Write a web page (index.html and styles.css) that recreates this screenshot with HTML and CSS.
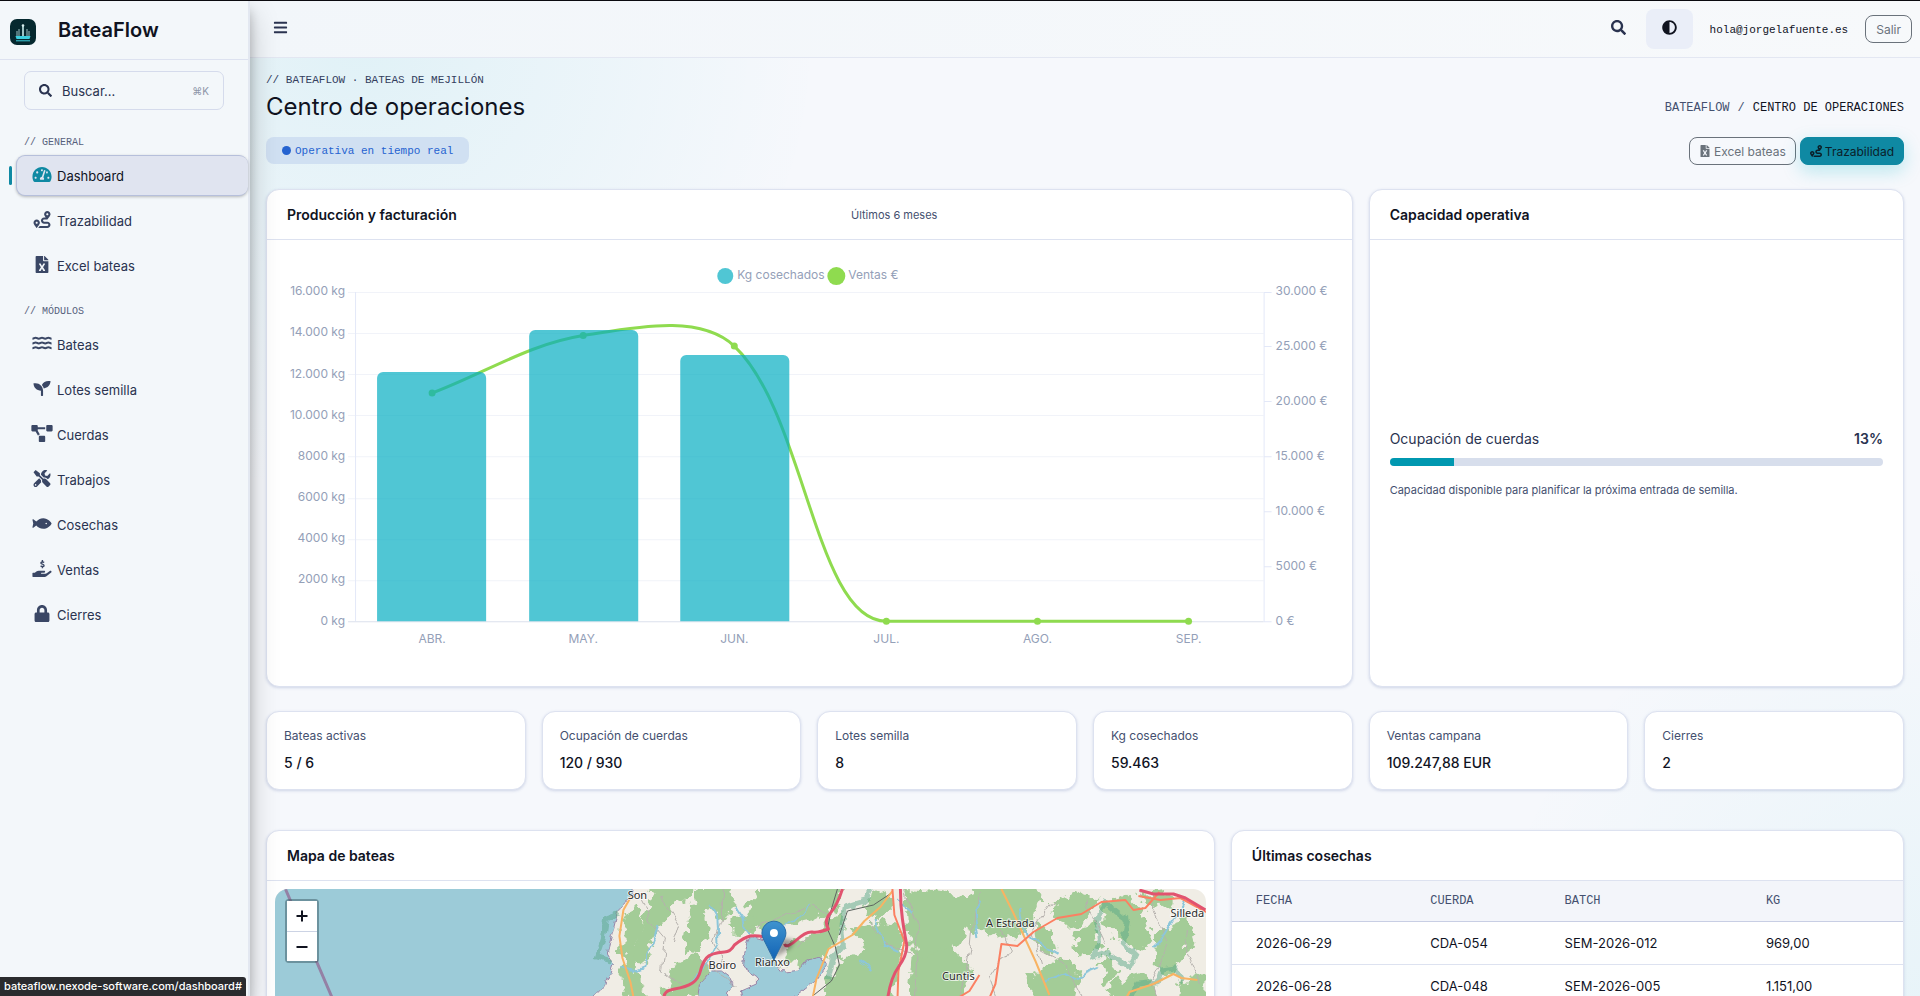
FILE: index.html
```html
<!DOCTYPE html>
<html lang="es">
<head>
<meta charset="utf-8">
<meta name="viewport" content="width=device-width, initial-scale=1">
<title>BateaFlow · Centro de operaciones</title>
<link rel="stylesheet" href="styles.css">
</head>
<body>
<svg class="sprite" aria-hidden="true">
  <symbol id="i-search" viewBox="0 0 512 512"><path d="M505 442.7L405.3 343c-4.5-4.5-10.6-7-17-7H372c27.6-35.3 44-79.7 44-128C416 93.1 322.9 0 208 0S0 93.1 0 208s93.1 208 208 208c48.3 0 92.7-16.4 128-44v16.3c0 6.4 2.5 12.5 7 17l99.7 99.7c9.4 9.4 24.6 9.4 33.9 0l28.3-28.3c9.4-9.4 9.4-24.6.1-34zM208 336c-70.7 0-128-57.2-128-128 0-70.7 57.2-128 128-128 70.7 0 128 57.2 128 128 0 70.7-57.2 128-128 128z"/></symbol>
  <symbol id="i-contrast" viewBox="0 0 512 512"><path d="M8 256c0 136.966 111.033 248 248 248s248-111.034 248-248S392.966 8 256 8 8 119.033 8 256zm248 184V72c101.705 0 184 82.311 184 184 0 101.705-82.311 184-184 184z"/></symbol>
  <symbol id="i-bars" viewBox="0 0 448 512"><path d="M16 60h416a16 16 0 0 1 16 16v40a16 16 0 0 1-16 16H16a16 16 0 0 1-16-16V76a16 16 0 0 1 16-16zm0 160h416a16 16 0 0 1 16 16v40a16 16 0 0 1-16 16H16a16 16 0 0 1-16-16v-40a16 16 0 0 1 16-16zm0 160h416a16 16 0 0 1 16 16v40a16 16 0 0 1-16 16H16a16 16 0 0 1-16-16v-40a16 16 0 0 1 16-16z"/></symbol>
  <symbol id="i-gauge" viewBox="0 0 576 512"><path d="M288 32C128.94 32 0 160.94 0 320c0 52.8 14.25 102.26 39.06 144.8 5.61 9.62 16.3 15.2 27.44 15.2h443c11.14 0 21.83-5.58 27.44-15.2C561.75 422.26 576 372.8 576 320c0-159.06-128.94-288-288-288zm0 64c14.71 0 26.58 10.13 30.32 23.65-1.11 2.26-2.64 4.23-3.45 6.67l-9.22 27.67c-5.13 3.49-10.97 6.01-17.64 6.01-17.67 0-32-14.33-32-32S270.33 96 288 96zM96 384c-17.67 0-32-14.33-32-32s14.33-32 32-32 32 14.33 32 32-14.33 32-32 32zm48-160c-17.67 0-32-14.33-32-32s14.33-32 32-32 32 14.33 32 32-14.33 32-32 32zm246.77-72.41l-61.33 184C343.13 347.33 352 364.54 352 384c0 11.72-3.38 22.55-8.88 32H232.88c-5.5-9.45-8.88-20.28-8.88-32 0-33.94 26.5-61.43 59.9-63.59l61.34-184.01c4.17-12.56 17.73-19.45 30.36-15.17 12.57 4.19 19.35 17.79 15.17 30.36zm14.66 57.2l15.52-46.55c3.47-1.29 7.13-2.23 11.05-2.23 17.67 0 32 14.33 32 32s-14.33 32-32 32c-11.38-.01-20.89-6.28-26.57-15.22zM480 384c-17.67 0-32-14.33-32-32s14.33-32 32-32 32 14.33 32 32-14.33 32-32 32z"/></symbol>
  <symbol id="i-route" viewBox="0 0 512 512"><path d="M416 320h-96c-17.6 0-32-14.4-32-32s14.4-32 32-32h96s96-107 96-160-43-96-96-96-96 43-96 96c0 25.500 22.200 63.400 45.300 96H320c-52.900 0-96 43.100-96 96s43.100 96 96 96h96c17.600 0 32 14.400 32 32s-14.400 32-32 32H185.500c-16 24.800-33.800 47.700-47.300 64H416c52.900 0 96-43.100 96-96s-43.100-96-96-96zm0-256c17.700 0 32 14.300 32 32s-14.300 32-32 32-32-14.300-32-32 14.300-32 32-32zM96 256c-53 0-96 43-96 96s96 160 96 160 96-107 96-160-43-96-96-96zm0 128c-17.700 0-32-14.300-32-32s14.300-32 32-32 32 14.300 32 32-14.300 32-32 32z"/></symbol>
  <symbol id="i-excel" viewBox="0 0 384 512"><path d="M224 136V0H24C10.700 0 0 10.700 0 24v464c0 13.300 10.700 24 24 24h336c13.300 0 24-10.700 24-24V160H248c-13.200 0-24-10.800-24-24zm60.100 106.500L224 336l60.100 93.500c5.100 8-.6 18.500-10.100 18.500h-34.900c-4.400 0-8.500-2.400-10.600-6.300C208.900 405.500 192 373 192 373c-6.400 14.800-10 20-36.600 68.800-2.100 3.900-6.100 6.300-10.500 6.300H110c-9.500 0-15.200-10.500-10.100-18.500l60.300-93.500-60.300-93.500c-5.200-8 .6-18.500 10.100-18.500h34.800c4.400 0 8.500 2.400 10.600 6.300 26.100 48.800 20 33.600 36.600 68.500 0 0 6.100-11.700 36.600-68.500 2.100-3.900 6.200-6.300 10.600-6.300H274c9.500-.1 15.200 10.400 10.100 18.400zM384 121.900v6.100H256V0h6.100c6.400 0 12.500 2.500 17 7l97.900 98c4.500 4.500 7 10.600 7 16.900z"/></symbol>
  <symbol id="i-water" viewBox="0 0 576 512"><path fill="none" stroke="currentColor" stroke-width="60" d="M0 112c50 0 56-32 96-32s46 32 96 32 56-32 96-32 46 32 96 32 56-32 96-32 46 32 96 32M0 256c50 0 56-32 96-32s46 32 96 32 56-32 96-32 46 32 96 32 56-32 96-32 46 32 96 32M0 400c50 0 56-32 96-32s46 32 96 32 56-32 96-32 46 32 96 32 56-32 96-32 46 32 96 32"/></symbol>
  <symbol id="i-seedling" viewBox="0 0 512 512"><path d="M64 96H0c0 123.700 100.300 224 224 224v144c0 8.800 7.200 16 16 16h32c8.800 0 16-7.200 16-16V320C288 196.300 187.700 96 64 96zm384-64c-84.200 0-157.400 46.500-195.700 115.200 27.700 30.200 48.200 66.900 59 107.600C424 243.100 512 147.900 512 32h-64z"/></symbol>
  <symbol id="i-diagram" viewBox="0 0 640 512"><path d="M384 320H256c-17.670 0-32 14.330-32 32v128c0 17.670 14.330 32 32 32h128c17.670 0 32-14.330 32-32V352c0-17.670-14.330-32-32-32zM192 32c0-17.670-14.330-32-32-32H32C14.330 0 0 14.330 0 32v128c0 17.670 14.330 32 32 32h95.720l73.160 128.040C211.980 300.980 232.400 288 256 288h.28L192 175.510V128h224V64H192V32zM608 0H480c-17.670 0-32 14.330-32 32v128c0 17.670 14.330 32 32 32h128c17.670 0 32-14.330 32-32V32c0-17.670-14.330-32-32-32z"/></symbol>
  <symbol id="i-tools" viewBox="0 0 512 512"><path d="M501.100 395.700L384 278.600c-23.100-23.100-57.600-27.600-85.400-13.900L192 158.100V96L64 0 0 64l96 128h62.100l106.600 106.600c-13.600 27.800-9.200 62.300 13.900 85.400l117.100 117.100c14.600 14.600 38.200 14.600 52.700 0l52.700-52.700c14.500-14.600 14.500-38.200 0-52.700zM331.700 225c28.300 0 54.900 11 74.900 31l19.400 19.400c15.800-6.900 30.800-16.500 43.800-29.500 37.100-37.100 49.700-89.300 37.900-136.700-2.200-9-13.500-12.100-20.100-5.500l-74.400 74.400-67.900-11.300L334 98.900l74.400-74.400c6.600-6.600 3.400-17.900-5.700-20.200-47.400-11.700-99.600.9-136.600 37.900-28.500 28.500-41.900 66.100-41.200 103.600l82.100 82.100c8.100-1.900 16.500-2.900 24.700-2.900zm-103.900 82l-56.700-56.700L18.700 402.800c-25 25-25 65.500 0 90.500s65.500 25 90.500 0l123.600-123.600c-7.600-19.900-9.900-41.600-5-62.700zM64 472c-13.200 0-24-10.800-24-24 0-13.300 10.700-24 24-24s24 10.700 24 24c0 13.200-10.700 24-24 24z"/></symbol>
  <symbol id="i-fish" viewBox="0 0 576 512"><path d="M327.100 96c-89.970 0-168.540 54.770-212.270 101.630L27.500 131.580c-12.130-9.180-30.240.6-27.140 14.660L24.540 256 .35 365.770c-3.100 14.060 15.010 23.830 27.140 14.660l87.330-66.050C158.550 361.230 237.130 416 327.100 416 464.560 416 576 288 576 256S464.560 96 327.100 96zm87.430 184c-13.250 0-24-10.750-24-24 0-13.260 10.750-24 24-24 13.260 0 24 10.740 24 24 0 13.250-10.750 24-24 24z"/></symbol>
  <symbol id="i-hand" viewBox="0 0 576 512"><path d="M565.300 328.100c-11.800-10.700-30.200-10-42.600 0L430.300 402c-11.300 9.100-25.400 14-40 14H272c-8.800 0-16-7.200-16-16s7.200-16 16-16h78.300c15.900 0 30.700-10.900 33.300-26.600 3.300-20-12.100-37.400-31.600-37.400H192c-27 0-53.100 9.300-74.100 26.300L71.400 384H16c-8.800 0-16 7.200-16 16v96c0 8.800 7.200 16 16 16h356.800c14.500 0 28.600-4.900 40-14L564 377c15.200-12.100 16.400-35.300 1.300-48.900z"/><path fill="none" stroke="currentColor" stroke-width="42" d="M352 76c-20-22-92-26-98 10-6 46 100 34 96 82-4 38-76 36-104 6M300 0v50M300 196v50"/></symbol>
  <symbol id="i-lock" viewBox="0 0 448 512"><path d="M400 224h-24v-72C376 68.200 307.800 0 224 0S72 68.200 72 152v72H48c-26.500 0-48 21.500-48 48v192c0 26.500 21.500 48 48 48h352c26.500 0 48-21.500 48-48V272c0-26.500-21.500-48-48-48zm-104 0H152v-72c0-39.700 32.300-72 72-72s72 32.300 72 72v72z"/></symbol>
</svg>

<div class="app">
  <aside class="sidebar">
    <a class="brand" href="#">
      <svg class="brand-logo" viewBox="0 0 26 26" aria-hidden="true">
        <rect width="26" height="26" rx="7" fill="#06292f"/>
        <g stroke="#9fc3c4" stroke-width="1"><path d="M13 7v11" stroke-width="2"/><path d="M9 10v8M17 10v8M7 12v6M19 12v6"/></g>
        <circle cx="13" cy="6.500" r="1.300" fill="#d9eeee"/>
        <path d="M5.500 17h15l-1 3h-13z" fill="#3ccfdd"/>
        <path d="M6 21.800h14" stroke="#3ccfdd" stroke-width="1"/>
      </svg>
      <span>BateaFlow</span>
    </a>
    <label class="search">
      <svg class="ico-sm"><use href="#i-search"/></svg>
      <input type="text" placeholder="Buscar..." aria-label="Buscar">
      <kbd>⌘K</kbd>
    </label>
    <nav>
      <p class="nav-label">// GENERAL</p>
      <ul>
        <li><a class="nav-link active" href="#"><svg><use href="#i-gauge"/></svg>Dashboard</a></li>
        <li><a class="nav-link" href="#"><svg><use href="#i-route"/></svg>Trazabilidad</a></li>
        <li><a class="nav-link" href="#"><svg><use href="#i-excel"/></svg>Excel bateas</a></li>
      </ul>
      <p class="nav-label">// MÓDULOS</p>
      <ul>
        <li><a class="nav-link" href="#"><svg><use href="#i-water"/></svg>Bateas</a></li>
        <li><a class="nav-link" href="#"><svg><use href="#i-seedling"/></svg>Lotes semilla</a></li>
        <li><a class="nav-link" href="#"><svg><use href="#i-diagram"/></svg>Cuerdas</a></li>
        <li><a class="nav-link" href="#"><svg><use href="#i-tools"/></svg>Trabajos</a></li>
        <li><a class="nav-link" href="#"><svg><use href="#i-fish"/></svg>Cosechas</a></li>
        <li><a class="nav-link" href="#"><svg><use href="#i-hand"/></svg>Ventas</a></li>
        <li><a class="nav-link" href="#"><svg><use href="#i-lock"/></svg>Cierres</a></li>
      </ul>
    </nav>
  </aside>

  <div class="main">
    <header class="topbar">
      <button class="icon-btn menu" type="button" aria-label="Menú"><svg><use href="#i-bars"/></svg></button>
      <div class="topbar-right">
        <button class="icon-btn" type="button" aria-label="Buscar"><svg><use href="#i-search"/></svg></button>
        <button class="icon-btn theme" type="button" aria-label="Cambiar tema"><svg><use href="#i-contrast"/></svg></button>
        <span class="email">hola@jorgelafuente.es</span>
        <button class="btn logout" type="button">Salir</button>
      </div>
    </header>

    <main class="page">
      <div class="page-head">
        <div>
          <p class="eyebrow">// BATEAFLOW · BATEAS DE MEJILLÓN</p>
          <h1>Centro de operaciones</h1>
        </div>
        <nav class="crumbs" aria-label="Ruta"><a href="#">BATEAFLOW</a><span>/</span><b>CENTRO DE OPERACIONES</b></nav>
      </div>
      <div class="actions">
        <span class="badge"><i></i>Operativa en tiempo real</span>
        <div class="action-buttons">
          <a class="btn" href="#"><svg><use href="#i-excel"/></svg>Excel bateas</a>
          <a class="btn primary" href="#"><svg><use href="#i-route"/></svg>Trazabilidad</a>
        </div>
      </div>

      <div class="grid top-row">
        <section class="card span-8">
          <div class="card-head split"><h2>Producción y facturación</h2><small>Últimos 6 meses</small></div>
          <svg class="chart" viewBox="268 240 1084 446" role="img" aria-label="Kg cosechados y ventas por mes">
            <g class="legend">
              <circle cx="726" cy="276" r="8" fill="#50c6d4"/><text x="738" y="279">Kg cosechados</text>
              <circle cx="837" cy="276" r="9" fill="#8fdb4f"/><text x="849" y="279">Ventas €</text>
            </g>
            <path class="gridline" d="M349 292.500h915M349 333.500h915M349 374.500h915M349 415.500h915M349 456.500h915M349 498.500h915M349 539.500h915M349 580.500h915"/>
            <path class="axis" d="M356.500 292v329M1264.500 292v329M1264 292.500h8M1264 346.500h8M1264 401.500h8M1264 456.500h8M1264 511.500h8M1264 566.500h8M1264 621.500h8"/>
            <path class="baseline" d="M349 621.500h915"/>
            <g text-anchor="end">
              <text x="346" y="295">16.000 kg</text><text x="346" y="336">14.000 kg</text><text x="346" y="378">12.000 kg</text><text x="346" y="419">10.000 kg</text><text x="346" y="460">8000 kg</text><text x="346" y="501">6000 kg</text><text x="346" y="542">4000 kg</text><text x="346" y="583">2000 kg</text><text x="346" y="625">0 kg</text>
            </g>
            <g>
              <text x="1276" y="295">30.000 €</text><text x="1276" y="350">25.000 €</text><text x="1276" y="405">20.000 €</text><text x="1276" y="460">15.000 €</text><text x="1276" y="515">10.000 €</text><text x="1276" y="570">5000 €</text><text x="1276" y="625">0 €</text>
            </g>
            <g text-anchor="middle">
              <text x="433" y="643">ABR.</text><text x="584" y="643">MAY.</text><text x="735" y="643">JUN.</text><text x="887" y="643">JUL.</text><text x="1038" y="643">AGO.</text><text x="1189" y="643">SEP.</text>
            </g>
            <path class="line" d="M433 393C486 373 530 344 584 335.500C636 327.500 700 313.400 735 346C806 413 816 621 887 621H1189"/>
            <g fill="#8fdb4f"><circle cx="433" cy="393" r="3.500"/><circle cx="584" cy="335.500" r="3.500"/><circle cx="735" cy="346" r="3.500"/><circle cx="887" cy="621" r="3.500"/><circle cx="1038" cy="621" r="3.500"/><circle cx="1189" cy="621" r="3.500"/></g>
            <path class="bars" d="M378 621V378a6 6 0 0 1 6-6h97a6 6 0 0 1 6 6v243zM530 621V336a6 6 0 0 1 6-6h97a6 6 0 0 1 6 6v285zM681 621V361a6 6 0 0 1 6-6h97a6 6 0 0 1 6 6v260z"/>
          </svg>
        </section>

        <section class="card span-4 capacity">
          <div class="card-head"><h2>Capacidad operativa</h2></div>
          <div class="capacity-body">
            <div class="capacity-row"><span>Ocupación de cuerdas</span><b>13%</b></div>
            <div class="meter" role="progressbar" aria-valuenow="13" aria-valuemin="0" aria-valuemax="100" aria-label="Ocupación de cuerdas"><div style="width:13%"></div></div>
            <p>Capacidad disponible para planificar la próxima entrada de semilla.</p>
          </div>
        </section>
      </div>

      <div class="grid kpis">
        <div class="card kpi"><span>Bateas activas</span><b>5 / 6</b></div>
        <div class="card kpi"><span>Ocupación de cuerdas</span><b>120 / 930</b></div>
        <div class="card kpi"><span>Lotes semilla</span><b>8</b></div>
        <div class="card kpi"><span>Kg cosechados</span><b>59.463</b></div>
        <div class="card kpi"><span>Ventas campana</span><b>109.247,88 EUR</b></div>
        <div class="card kpi"><span>Cierres</span><b>2</b></div>
      </div>

      <div class="grid bottom-row">
        <section class="card span-7">
          <div class="card-head"><h2>Mapa de bateas</h2></div>
          <div class="map">
            <svg class="map-art" viewBox="275 889 932 320" preserveAspectRatio="xMidYMin slice" role="img" aria-label="Mapa de la ría de Arousa">
              <defs>
                <filter id="ragged" x="-5%" y="-5%" width="110%" height="110%"><feTurbulence type="fractalNoise" baseFrequency="0.09" numOctaves="3" seed="7"/><feDisplacementMap in="SourceGraphic" scale="20" xChannelSelector="R" yChannelSelector="G"/></filter>
                <filter id="coast" x="-5%" y="-5%" width="110%" height="110%"><feTurbulence type="fractalNoise" baseFrequency="0.12" numOctaves="2" seed="3"/><feDisplacementMap in="SourceGraphic" scale="7" xChannelSelector="R" yChannelSelector="G"/></filter>
                <filter id="wiggle" x="-5%" y="-5%" width="110%" height="110%"><feTurbulence type="fractalNoise" baseFrequency="0.06" numOctaves="2" seed="11"/><feDisplacementMap in="SourceGraphic" scale="12" xChannelSelector="R" yChannelSelector="G"/></filter>
                <linearGradient id="pin" x1="0" y1="0" x2="0" y2="1"><stop offset="0" stop-color="#3f93cf"/><stop offset="1" stop-color="#1263b5"/></linearGradient>
                <filter id="soft" x="-50%" y="-50%" width="200%" height="200%"><feGaussianBlur stdDeviation="2"/></filter>
              </defs>
              <rect x="275" y="889" width="932" height="320" fill="#f0ede5"/>
              <g class="woods" filter="url(#ragged)">
                <path d="M655 885h42l-10 14-14 4-8 18-10 16-4 18-12 10-8-4 6-22 10-26z"/>
                <path d="M697 885h34l6 22-14 12-12-14-8 10 6 24-14 16-10-4 4-30z"/>
                <path d="M763 885h82l-8 22-22 12-26 6-22 14-14-8-18 4-6-14 18-8z"/>
                <path d="M792 938l30-6 8-16 14-6-2 24-14 22-24 12-22-4z"/>
                <path d="M733 920l20-6 4 14-24 6z"/>
                <path d="M625 915l12-6 6 16-8 20 4 34 10 22h-22l-6-30z"/>
                <path d="M840 960l34-16 18-16 12 22-10 46 2 60h-100l18-46z"/>
                <path d="M850 930l26-8 24 4 4 22-34 2z"/>
                <path d="M868 900l20-8 8 14-16 14-14-4z"/>
                <path d="M906 890l34 2 34 4 8 20-14 8-6 20-26 16-18 2-10-22z"/>
                <path d="M975 885h60l10 18-20 30-30 4-28-10z"/>
                <path d="M912 960l40-12 20 20-14 36-50 8z"/>
                <path d="M676 964l22-10 14 18-12 24-40 8z"/>
                <path d="M1050 905l28-14 22 8-18 24-20 2zM1012 912l20-6 6 16-24 4zM1036 925l14 4 6 22-16 2z"/>
                <path d="M1104 906l22-12 18 18 10 28-14 12-20-14-16-12zM1075 930l20-6 8 26-22 8z"/>
                <path d="M1158 930l30-10 8 18-26 38-14-6zM1098 958l12-6 8 26-12 6z"/>
                <path d="M1030 974l34-16 16 14-8 34-40 6zM1110 984l34-12 18 26-48 14zM1180 984l24-12v38l-26-6zM1140 892l24-2 10 14-22 4z"/>
                <path d="M868 1010l120 20-20 90-140-10zM1020 1040l90 30-10 80-100-20z"/>
              </g>
              <g class="sea" filter="url(#coast)">
                <path d="M260 870h376l-3 26-10 7-5 10-6 24-4 16 6 10-8 22-12 12-8 240H260z"/>
                <path d="M750 936l15 4 10 20 10 12 15-2 8-10 14-3 5 8-12 16-20 16-10 14h-40l-4-20 16-7v-7l-14-10 2-13z"/>
                <path d="M712 971l10 0 8 6 4 8-6 8 2 20h-34l4-28z"/>
              </g>
              <g class="reserve" filter="url(#coast)">
                <path d="M620 914l-13 5-3 20-6 18 14 4M872 889l-6 12-20 6-4 22 2 16-10 12-6 24"/>
                <path d="M1106 903l22 18-4 22 12 12-6 12-22-14-14 4 6-16-2-20z"/>
                <path d="M1130 1000l8-16 20-2 4-12 14-2 8 14"/>
              </g>
              <g class="minor" filter="url(#wiggle)"><path d="M640 900l14 26 12 14-4 30 20 14M752 930l30-14 32-12 14 8M722 889v30l-8 22 10 20M796 948l20-16M905 889l14 40-4 70M980 889l-6 30-2 24-12 60M1040 950l26 14 20 40M1144 892l20 34 2 30-14 24 8 20M1190 930l-4 24 14 30M1056 900l-24 34 8 30M868 920l20 26 24 6M1000 930l10 18-20 30 8 22M660 895l20 30-6 20M1086 900l20 42M700 962l24 14 12 12"/></g>
              <g class="rivers" filter="url(#wiggle)"><path d="M622 966l12 4 10-4 4-14 6-10 6-16M710 903l8 14 1 24-10 20-18 20M736 906l10 14 4 16M788 928l14-12 8-14M875 920l10 26 14 6M1020 910l6 22 10 10 20 12M1046 980l20-8 10 6 24-10M1185 900l-20 34-12 12M980 900l-5 14 4 24M898 900l14 10M860 960l14 10"/></g>
              <g class="rail"><path d="M838 889l-6 20-4 20 8 18 4 18-8 16-20 16M892 893l-18 12-26 6-8 24"/></g>
              <g class="orange"><path d="M632 896l-8 14-4 26 3 22 8 24 4 20M893 891l-12 16-16 14-12 14-24 14-12 30-4 20M1002 889l12 24 10 22 12 26 14 34M1120 1010l10-18 24-8 20-10 8 4 16 2"/></g>
              <g class="red"><path d="M1207 912l-26-14-20 2-22-4M1160 892l-14 16-12 2-8-10-24 2-20 12-24 4-24 14-16 14-16-2-6 40-6 14-20 8M893 889l2 26 10 26-6 30-1 30M980 975l-10 16-20 12"/></g>
              <g class="motorway"><path d="M843 889q-5 16-12 24t-2 16q-10 4-16 3t-16 8-12 4M765 937q-8-2-14-1t-16 9q-4 7-10 7-14 1-18 6t-6 13-8 12-18 6-10 10M901 889q0 16 2 30t4 24-8 24-12 44M1140 890l14 4 20 0 12 4 20 12"/></g>
              <g class="boundary"><path d="M286 889l46 107 90 213"/></g>
              <g class="shadow" filter="url(#soft)"><path d="M775 958l8-20 12 2-4 8z"/></g>
              <g class="places"><text x="638" y="899">Son</text><text x="723" y="969">Boiro</text><text x="773" y="966">Rianxo</text><text x="1011" y="927">A Estrada</text><text x="959" y="980">Cuntis</text><text x="1188" y="917">Silleda</text></g>
              <path d="M774.500 960L764 939a12 12 0 1 1 21 0z" fill="url(#pin)" stroke="#2a6ea8"/>
              <circle cx="774.500" cy="933" r="4" fill="#fff"/>
            </svg>
            <div class="zoom"><button type="button" aria-label="Acercar"><svg viewBox="0 0 14 14"><path d="M7 1.500v11M1.500 7h11"/></svg></button><button type="button" aria-label="Alejar"><svg viewBox="0 0 14 14"><path d="M1.500 7h11"/></svg></button></div>
          </div>
        </section>

        <section class="card span-5">
          <div class="card-head"><h2>Últimas cosechas</h2></div>
          <table>
            <colgroup><col class="c-date"><col class="c-rope"><col class="c-batch"><col></colgroup>
            <thead><tr><th scope="col">FECHA</th><th scope="col">CUERDA</th><th scope="col">BATCH</th><th scope="col">KG</th></tr></thead>
            <tbody>
              <tr><td>2026-06-29</td><td>CDA-054</td><td>SEM-2026-012</td><td>969,00</td></tr>
              <tr><td>2026-06-28</td><td>CDA-048</td><td>SEM-2026-005</td><td>1.151,00</td></tr>
            </tbody>
          </table>
        </section>
      </div>
    </main>
  </div>
</div>
<div class="status">bateaflow.nexode-software.com/dashboard#</div>
</body>
</html>
```
FILE: styles.css
```css
:root {
  --ink: #10131f;
  --text: #2a3350;
  --muted: #44506f;
  --line: #dde2f0;
  --teal: #0f89a3;
  --sans: Inter, "Liberation Sans", sans-serif;
  --mono: "Liberation Mono", monospace;
}
* { box-sizing: border-box; }
body {
  margin: 0;
  font-family: var(--sans);
  font-size: 14px;
  color: var(--ink);
  background:
    radial-gradient(circle at 360px 40px, rgba(6, 174, 194, .09), rgba(6, 174, 194, 0) 460px),
    radial-gradient(circle at 100% 100%, rgba(6, 174, 194, .06), rgba(6, 174, 194, 0) 440px),
    #f6f8fc;
}
h1, h2, p, ul { margin: 0; padding: 0; }
ul { list-style: none; }
a { color: inherit; text-decoration: none; }
button, input { font: inherit; color: inherit; }
svg { fill: currentColor; }
.sprite { position: absolute; width: 0; height: 0; }

.app { display: flex; height: 100vh; overflow: hidden; border-top: 1px solid #0a0a0f; }

/* Sidebar */
.sidebar {
  position: relative;
  z-index: 2;
  flex: none;
  width: 250px;
  background: #f3f7fa;
  border-right: 2px solid #e3e8f1;
  box-shadow: 0 14px 28px rgba(0, 0, 0, .22), 0 10px 10px rgba(0, 0, 0, .2);
}
.brand {
  display: flex;
  align-items: center;
  gap: 22px;
  height: 59px;
  padding-left: 10px;
  border-bottom: 1px solid var(--line);
  font-size: 20px;
  font-weight: 600;
}
.brand-logo { width: 26px; height: 26px; margin-top: 3px; }
.search {
  display: flex;
  align-items: center;
  gap: 10px;
  height: 39px;
  margin: 11px 24px 0;
  padding: 0 14px;
  border: 1px solid #d5dbec;
  border-radius: 7px;
  color: var(--text);
}
.ico-sm { flex: none; width: 13px; height: 13px; }
.search input { flex: 1; min-width: 0; width: 100%; padding: 0; border: 0; background: none; outline: 0; font-size: 13px; }
.search input::placeholder { color: var(--text); opacity: 1; }
.search kbd { font-family: var(--sans); font-size: 10px; color: #8d95a8; }
.nav-label {
  margin: 25px 0 4px 24px;
  font: 10px/16px var(--mono);
  color: #56617c;
}
nav ul { display: grid; gap: 4px; padding-left: 16px; }
.nav-link {
  position: relative;
  display: flex;
  align-items: center;
  gap: 3px;
  height: 41px;
  padding-left: 13px;
  border: 1px solid transparent;
  font-size: 13px;
  color: var(--text);
}
.nav-link svg { width: 24px; height: 17px; margin-bottom: 3px; color: #3a4765; }
.nav-link.active {
  border-color: #b6bfdb;
  border-right: 0;
  border-radius: 9px;
  background: #e0e4f0;
  box-shadow: 0 1px 3px rgba(0, 0, 0, .25);
  color: var(--ink);
}
.nav-link.active svg { color: var(--teal); }
.nav-link.active::before {
  content: "";
  position: absolute;
  left: -8px;
  top: 10px;
  width: 3px;
  height: 19px;
  border-radius: 2px;
  background: var(--teal);
}
nav ul + .nav-label { margin-top: 18px; }

/* Top bar */
.main { flex: 1; min-width: 0; }
.topbar {
  display: flex;
  align-items: center;
  justify-content: space-between;
  height: 57px;
  padding: 0 8px 0 10px;
  background: linear-gradient(90deg, #f2f6fa, #f7f9fb);
  border-bottom: 1px solid #e3e7f2;
}
.topbar-right { display: flex; align-items: center; }
.icon-btn {
  display: grid;
  place-items: center;
  width: 47px;
  height: 40px;
  padding: 0 0 4px;
  border: 0;
  border-radius: 8px;
  background: none;
  color: var(--text);
}
.icon-btn svg { width: 15px; height: 15px; }
.icon-btn.menu { width: 41px; }
.icon-btn.theme { margin-left: 4px; background: #eaeef8; color: var(--ink); }
.email { margin: 2px 17px 0; font: 11px/16px var(--mono); }
.btn {
  display: inline-flex;
  align-items: center;
  justify-content: center;
  gap: 3px;
  height: 28px;
  padding: 0 9px;
  border: 1px solid #6a727b;
  border-radius: 8px;
  background: none;
  font-size: 12px;
  color: #6a727b;
}
.btn svg { width: 12px; height: 12px; }
.btn.logout { padding: 0 10px; }
.btn.primary {
  border-color: var(--teal);
  background: var(--teal);
  color: #0b2029;
  box-shadow: 0 6px 18px rgba(6, 182, 200, .25);
}

/* Page heading */
.page { padding: 14px 16px; }
.page-head { display: flex; justify-content: space-between; align-items: flex-end; }
.eyebrow { font: 11px/16px var(--mono); color: #34405e; }
h1 { margin-top: 3px; font-size: 24px; line-height: 32px; font-weight: 400; }
.crumbs { display: flex; gap: 8px; padding-bottom: 7px; font: 12px/16px var(--mono); color: var(--muted); }
.crumbs b { font-weight: 400; color: var(--ink); }
.actions { display: flex; justify-content: space-between; align-items: flex-start; margin-top: 14px; }
.action-buttons { display: flex; gap: 4px; }
.badge {
  display: flex;
  align-items: center;
  gap: 4px;
  height: 27px;
  padding: 0 16px;
  border-radius: 8px;
  background: #d0e0f2;
  font: 11px/16px var(--mono);
  color: #2563d0;
}
.badge i { width: 9px; height: 9px; border-radius: 50%; background: #2563d0; }

/* Cards */
.grid { display: grid; grid-template-columns: repeat(12, minmax(0, 1fr)); gap: 16px; }
.top-row { margin-top: 24px; }
.span-8 { grid-column: span 8; }
.span-7 { grid-column: span 7; }
.span-5 { grid-column: span 5; }
.span-4 { grid-column: span 4; }
.card {
  overflow: hidden;
  border: 1px solid var(--line);
  border-radius: 13px;
  background: #fff;
  box-shadow: 0 1px 3px rgba(70, 90, 160, .22);
}
.card-head { display: flex; align-items: center; height: 50px; padding: 0 20px; border-bottom: 1px solid var(--line); }
.card-head.split { justify-content: space-between; }
.card-head.split::after { content: ""; }
.card-head h2 { font-size: 14px; font-weight: 600; }
.card-head small { font-size: 11px; color: var(--muted); }

.chart { display: block; width: 100%; }
.chart text { font-size: 12px; fill: #94a0b8; }
.gridline { stroke: #f1f3f9; }
.axis { stroke: #e3e8f8; }
.baseline { stroke: #dbe0ec; }
.line { fill: none; stroke: #8fdb4f; stroke-width: 3; }
.bars { fill: rgba(5, 174, 194, .7); }

.capacity { display: flex; flex-direction: column; }
.capacity-body { flex: 1; display: flex; flex-direction: column; justify-content: center; padding: 0 20px; color: var(--text); }
.capacity-row { display: flex; justify-content: space-between; line-height: 20px; }
.capacity-row b { font-weight: 600; }
.meter { height: 8px; margin: 9px 0 16px; border-radius: 4px; overflow: hidden; background: #d7deec; }
.meter div { height: 100%; background: #0098b0; }
.capacity-body p { font-size: 11px; line-height: 16px; color: var(--muted); }

.kpis { margin-top: 24px; }
.kpi { grid-column: span 2; display: grid; gap: 7px; padding: 14px 17px 16px; }
.kpi span { font-size: 12px; line-height: 20px; color: var(--muted); }
.kpi b { font-size: 14px; line-height: 20px; font-weight: 500; }

.bottom-row { margin-top: 40px; }

/* Map */
.map { position: relative; margin: 8px; height: 320px; border-radius: 13px; overflow: hidden; }
.map-art { display: block; width: 100%; height: 100%; }
.woods { fill: #a3cc97; }
.sea { fill: #9ccbd8; stroke: #9a86a8; }
.reserve { fill: none; stroke: #5aa888; stroke-width: 5; opacity: .5; }
.minor { fill: none; stroke: #b5b1ad; }
.rivers { fill: none; stroke: #8cc6da; stroke-width: 2; }
.rail { fill: none; stroke: #5d6460; }
.orange { fill: none; stroke: #f8b363; stroke-width: 2; stroke-linejoin: round; }
.red { fill: none; stroke: #fb8062; stroke-width: 2; stroke-linejoin: round; }
.motorway { fill: none; stroke: #e1536f; stroke-width: 3; stroke-linejoin: round; }
.boundary { fill: none; stroke: #9481a5; stroke-width: 3; }
.shadow { fill: rgba(0, 0, 0, .35); }
.places { font: 11px "Noto Sans", sans-serif; fill: #2c2c2c; text-anchor: middle; paint-order: stroke; stroke: rgba(255, 255, 255, .7); stroke-width: 2; }
.zoom {
  position: absolute;
  left: 10px;
  top: 10px;
  display: grid;
  border: 2px solid rgba(60, 90, 100, .5);
  border-radius: 4px;
  background-clip: padding-box;
}
.zoom button { display: grid; place-items: center; width: 30px; height: 30px; padding: 0; border: 0; background: #fff; }
.zoom button + button { border-top: 1px solid #ccd3e4; }
.zoom svg { width: 14px; height: 14px; stroke: #10131f; stroke-width: 2; }

/* Harvest table */
table { width: 100%; table-layout: fixed; border-collapse: collapse; }
.c-date { width: 26%; }
.c-rope { width: 20%; }
.c-batch { width: 30%; }
th, td { padding: 0 0 0 24px; text-align: left; }
th { height: 40px; background: #f3f5fa; font: 12px var(--mono); color: #44506f; }
thead tr { border-bottom: 1px solid #c8cee4; }
td { height: 43px; font-size: 13px; border-bottom: 1px solid var(--line); }

.status {
  position: fixed;
  left: 0;
  bottom: 0;
  z-index: 5;
  padding: 0 4px;
  border-radius: 0 3px 0 0;
  background: #2a2b2e;
  font-size: 11px;
  line-height: 19px;
  font-weight: 500;
  color: #fff;
}
```
